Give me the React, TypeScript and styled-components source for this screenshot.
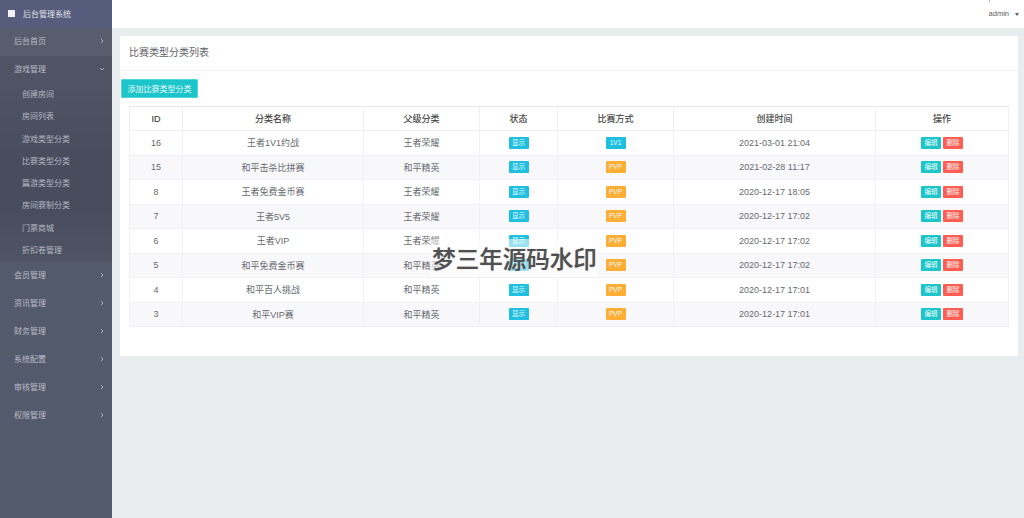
import React from "react";
import styled, { createGlobalStyle } from "styled-components";

const Global = createGlobalStyle`
  html, body { margin: 0; padding: 0; height: 518px; overflow: hidden; background: #e9edf0; }
  body { font-family: "Liberation Sans", "Noto Sans CJK SC", sans-serif; }
  * { box-sizing: border-box; }
`;

const Page = styled.div`
  display: flex;
  width: 1024px;
  height: 518px;
  position: relative;
  overflow: hidden;
`;

const Sidebar = styled.aside`
  width: 112px;
  flex: none;
  background: #535a6b;
  display: flex;
  flex-direction: column;
`;

const Brand = styled.div`
  height: 28px;
  background: #565c7c;
  display: flex;
  align-items: center;
  gap: 8px;
  padding: 0 0 2px 8px;
  color: #e0e1e8;
  font-size: 8px;
`;

const BrandMark = styled.span`
  width: 7px;
  height: 7px;
  background: #f2f2f5;
`;

const NavItem = styled.div<{ $open?: boolean; $first?: boolean }>`
  height: 28px;
  display: flex;
  align-items: center;
  justify-content: space-between;
  padding: 0 7px 3px 14px;
  font-size: 8px;
  color: #b9bcc5;
  background: ${(p) => (p.$open ? "#4e5464" : p.$first ? "#575d6c" : "transparent")};
`;

const SubList = styled.div`
  height: 178px;
  background: linear-gradient(#4e5464, #484d5e 40%, #484d5e 70%, #4e5464);
  display: flex;
  flex-direction: column;
`;

const SubItem = styled.div`
  height: 22.3px;
  display: flex;
  align-items: center;
  padding: 0 0 3px 22px;
  font-size: 8px;
  color: #b4b7c0;
`;

const Main = styled.main`
  flex: 1;
  display: flex;
  flex-direction: column;
  min-width: 0;
`;

const TopBar = styled.header`
  height: 28px;
  background: #fff;
  display: flex;
  justify-content: flex-end;
  align-items: flex-end;
  padding: 0 5px 10px 0;
  gap: 4px;
  color: #5c6066;
  font-size: 7.5px;
  line-height: 9px;
  position: relative;
`;

const Tick = styled.span`
  position: absolute;
  left: 877px;
  top: 0;
  width: 1px;
  height: 2px;
  background: #b5b7bb;
`;

const Caret = styled.span`
  width: 0;
  height: 0;
  border-left: 2.5px solid transparent;
  border-right: 2.5px solid transparent;
  border-top: 3px solid #5c6066;
  margin: 0 0 2px 2px;
`;

const Content = styled.div`
  padding: 8px 6px 0 8px;
`;

const Card = styled.section`
  height: 320px;
  background: #fff;
`;

const CardHead = styled.div`
  height: 35px;
  border-bottom: 1px solid #f3f4f6;
  display: flex;
  align-items: center;
  padding: 0 0 3px 9px;
  font-size: 10px;
  color: #5f6368;
`;

const CardBody = styled.div`
  padding: 8px 9px 0 1px;
`;

const AddButton = styled.button`
  display: block;
  width: 77px;
  height: 19px;
  padding: 0 0 1px;
  background: #1cc5c9;
  border: 1px solid #4fd6d9;
  border-radius: 1px;
  color: #e9fbfb;
  font: inherit;
  font-size: 8px;
  margin-bottom: 8px;
`;

const Table = styled.table`
  width: 879px;
  margin-left: 8px;
  border-collapse: collapse;
  table-layout: fixed;
  border: 1px solid #e7e8ec;
`;

const Th = styled.th`
  height: 24px;
  border: 1px solid #eeeff3;
  border-top-color: #e7e8ec;
  font-size: 9px;
  font-weight: 400;
  color: #3f3f3f;
  text-align: center;
  padding: 0;
  -webkit-text-stroke: 0.15px #3f3f3f;
`;

const Tr = styled.tr<{ $alt: boolean }>`
  background: ${(p) => (p.$alt ? "#f8f8fb" : "#fff")};
`;

const Td = styled.td`
  height: 24.5px;
  border: 1px solid #f0f1f4;
  font-size: 9px;
  color: #666a6e;
  text-align: center;
  padding: 0;
`;

const Badge = styled.span<{ $bg: string }>`
  display: inline-block;
  vertical-align: middle;
  width: 20px;
  height: 12px;
  line-height: 12px;
  border-radius: 1px;
  background: ${(p) => p.$bg};
  color: #e8fbff;
  font-size: 6.5px;
  text-align: center;
`;

const ActionButton = styled.span<{ $bg: string }>`
  display: inline-block;
  vertical-align: middle;
  width: 20px;
  height: 12px;
  line-height: 12px;
  margin: 0 1px;
  border-radius: 1px;
  background: ${(p) => p.$bg};
  color: #f3fbfb;
  font-size: 6.5px;
  text-align: center;
`;

const Watermark = styled.div`
  position: absolute;
  left: 431px;
  top: 239px;
  width: 167px;
  height: 38px;
  background: rgba(255, 255, 255, 0.55);
  color: #505050;
  font-family: "Noto Sans CJK SC", sans-serif;
  font-size: 23.5px;
  font-weight: 500;
  line-height: 38px;
  text-align: center;
  white-space: nowrap;
  text-shadow: 0 0 1px rgba(80, 80, 80, 0.6);
`;

const Chevron = ({ down }: { down?: boolean }) => (
  <svg width="6" height="6" viewBox="0 0 6 6" fill="none" stroke="#b4b8c1" strokeWidth="0.9">
    <path d={down ? "M1 2l2 2 2-2" : "M2 1l2 2-2 2"} />
  </svg>
);

const subs = ["创建房间", "房间列表", "游戏类型分类", "比赛类型分类", "篇游类型分类", "房间赛制分类", "门票商城", "折扣卷管理"];
const rest = ["会员管理", "资讯管理", "财务管理", "系统配置", "审核管理", "权限管理"];
const widths = [53, 181, 116, 78, 116, 202, 133];
const heads = ["ID", "分类名称", "父级分类", "状态", "比赛方式", "创建时间", "操作"];
const rows: [number, string, string, string, string][] = [
  [16, "王者1V1约战", "王者荣耀", "1V1", "2021-03-01 21:04"],
  [15, "和平击杀比拼赛", "和平精英", "PVP", "2021-02-28 11:17"],
  [8, "王者免费金币赛", "王者荣耀", "PVP", "2020-12-17 18:05"],
  [7, "王者5V5", "王者荣耀", "PVP", "2020-12-17 17:02"],
  [6, "王者VIP", "王者荣耀", "PVP", "2020-12-17 17:02"],
  [5, "和平免费金币赛", "和平精英", "PVP", "2020-12-17 17:02"],
  [4, "和平百人挑战", "和平精英", "PVP", "2020-12-17 17:01"],
  [3, "和平VIP赛", "和平精英", "PVP", "2020-12-17 17:01"],
];

export default function App() {
  return (
    <Page>
      <Global />
      <Sidebar>
        <Brand><BrandMark />后台管理系统</Brand>
        <NavItem $first>后台首页<Chevron /></NavItem>
        <NavItem $open>游戏管理<Chevron down /></NavItem>
        <SubList>
          {subs.map((s) => <SubItem key={s}>{s}</SubItem>)}
        </SubList>
        {rest.map((s) => <NavItem key={s}>{s}<Chevron /></NavItem>)}
      </Sidebar>
      <Main>
        <TopBar><Tick />admin<Caret /></TopBar>
        <Content>
          <Card>
            <CardHead>比赛类型分类列表</CardHead>
            <CardBody>
              <AddButton>添加比赛类型分类</AddButton>
              <Table>
                <colgroup>
                  {widths.map((w, i) => <col key={i} width={w} />)}
                </colgroup>
                <thead>
                  <tr>{heads.map((h) => <Th key={h}>{h}</Th>)}</tr>
                </thead>
                <tbody>
                  {rows.map((r, i) => (
                    <Tr key={r[0]} $alt={i % 2 === 1}>
                      <Td>{r[0]}</Td>
                      <Td>{r[1]}</Td>
                      <Td>{r[2]}</Td>
                      <Td><Badge $bg="#1fbfe0">显示</Badge></Td>
                      <Td><Badge $bg={r[3] === "1V1" ? "#1fbfe0" : "#ffae35"}>{r[3]}</Badge></Td>
                      <Td>{r[4]}</Td>
                      <Td>
                        <ActionButton $bg="#1cc5c9">编辑</ActionButton>
                        <ActionButton $bg="#ff5c52">删除</ActionButton>
                      </Td>
                    </Tr>
                  ))}
                </tbody>
              </Table>
            </CardBody>
          </Card>
        </Content>
      </Main>
      <Watermark>梦三年源码水印</Watermark>
    </Page>
  );
}
